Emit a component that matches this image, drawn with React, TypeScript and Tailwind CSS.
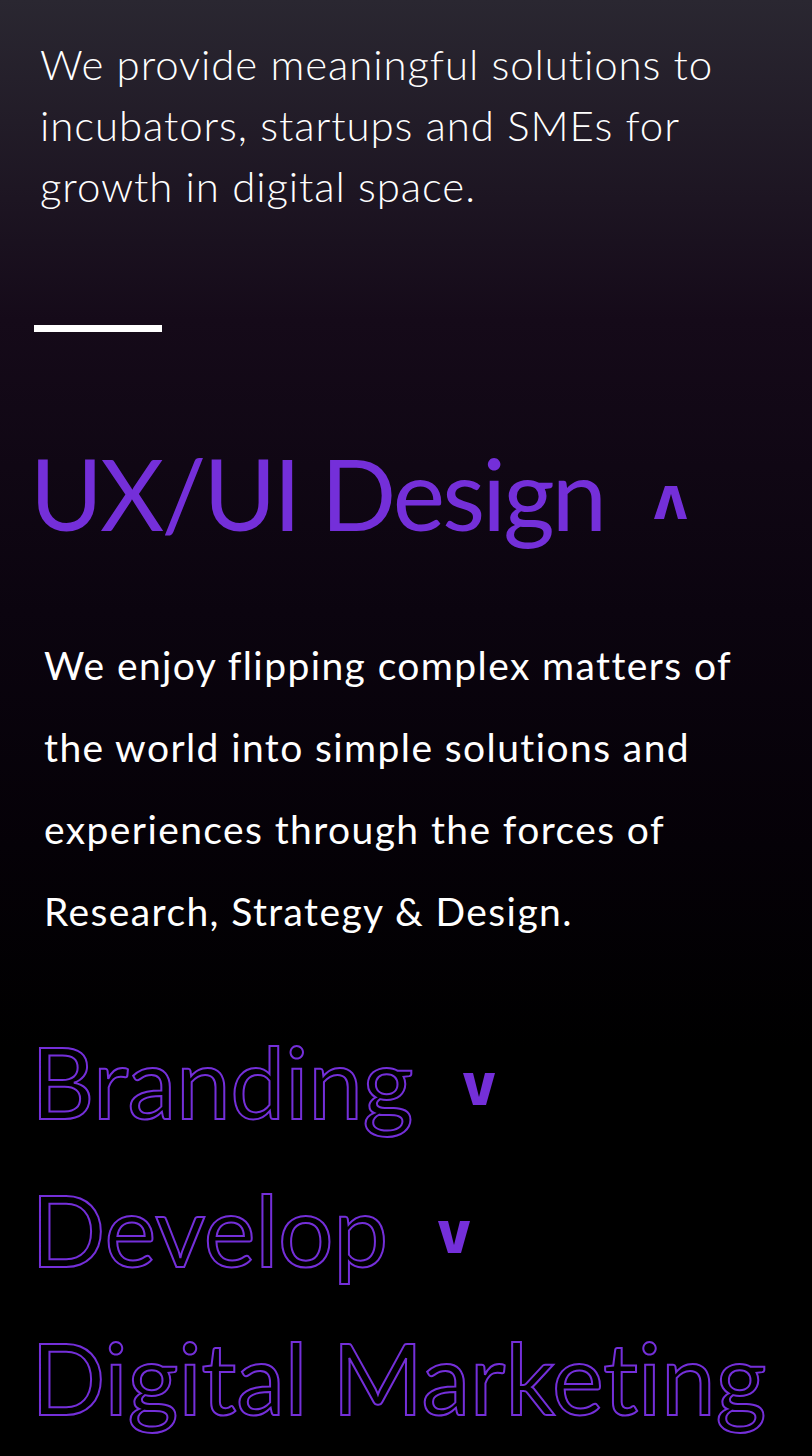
import React from 'react';

const PURPLE = '#742fd9';

const CaretUp = () => (
    <svg width="34" height="34" viewBox="0 0 34 34" className="shrink-0 mt-[20px]">
        <polygon points="11,0 23,0 33,33 24,33 17,8 10,33 0,33" fill={PURPLE} />
    </svg>
);

const CaretDown = () => (
    <svg width="32" height="32" viewBox="0 0 32 32" className="shrink-0 mt-[15px]">
        <polygon points="0,0 10,0 16,24 22,0 32,0 23,32 10,32" fill={PURPLE} />
    </svg>
);

const OutlineItem = ({ label, arrow }: { label: string; arrow?: boolean }) => (
    <div className="flex items-center gap-[50px] h-[148px]">
        <span className="text-[98px] leading-none tracking-[-0.3px] text-transparent whitespace-nowrap [-webkit-text-stroke:2px_#742fd9]">
            {label}
        </span>
        {arrow && <CaretDown />}
    </div>
);

export default function App() {
    return (
        <div
            className="min-h-[1456px] w-full bg-[linear-gradient(180deg,#2a2731_0%,#150a19_22%,#0b040f_42%,#050107_58%,#000_72%)] text-white overflow-hidden"
            style={{ fontFamily: 'Lato, "Noto Sans", sans-serif' }}
        >
            <p className="pl-10 pr-8 pt-[34px] text-[42px] leading-[61px] tracking-[0.9px] font-light">
                We provide meaningful solutions to incubators, startups and SMEs for growth in digital space.
            </p>

            <div className="ml-[34px] mt-[108px] h-[7px] w-[128px] bg-white" />

            <div className="ml-[30px] mt-[111px] flex items-center gap-[50px]">
                <h2 className="text-[99px] leading-none tracking-[-2.8px] text-[#742fd9] whitespace-nowrap">UX/UI Design</h2>
                <CaretUp />
            </div>

            <p className="ml-[44px] w-[708px] mt-[82px] text-[39px] leading-[82px] tracking-[1.4px]">
                We enjoy flipping complex matters of the world into simple solutions and experiences through the forces of
                Research, Strategy &amp; Design.
            </p>

            <div className="ml-[31px] mt-[55px] flex flex-col">
                <OutlineItem label="Branding" arrow />
                <OutlineItem label="Develop" arrow />
                <OutlineItem label="Digital Marketing" />
            </div>
        </div>
    );
}
